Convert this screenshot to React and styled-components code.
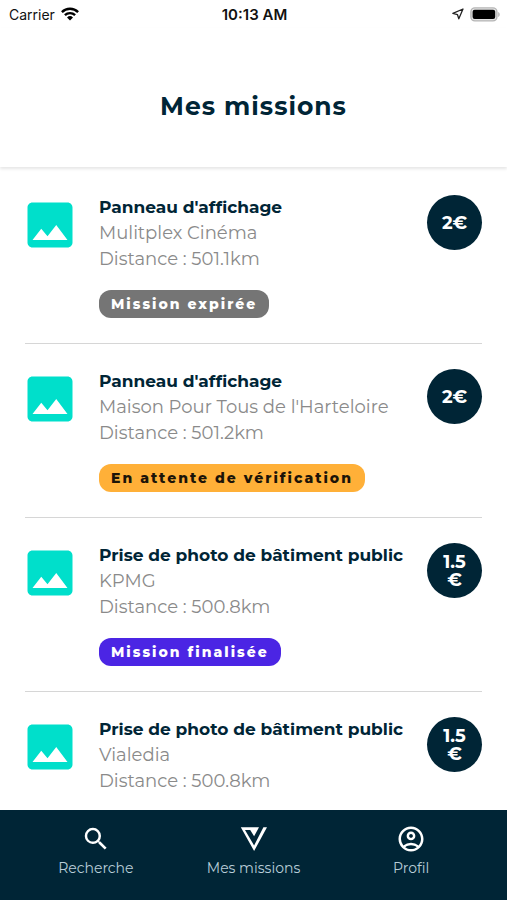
import styled, { createGlobalStyle } from "styled-components"
import { MdImage, MdSearch, MdOutlineAccountCircle } from "react-icons/md"

const missions = [
    { id: 1, title: "Panneau d'affichage", place: "Mulitplex Cinéma", distance: "501.1km", price: "2€", status: "expired" },
    { id: 2, title: "Panneau d'affichage", place: "Maison Pour Tous de l'Harteloire", distance: "501.2km", price: "2€", status: "pending" },
    { id: 3, title: "Prise de photo de bâtiment public", place: "KPMG", distance: "500.8km", price: "1.5€", status: "done" },
    { id: 4, title: "Prise de photo de bâtiment public", place: "Vialedia", distance: "500.8km", price: "1.5€" },
]

const statuses = {
    expired: { label: "Mission expirée", background: "#757575", color: "#ffffff" },
    pending: { label: "En attente de vérification", background: "#ffb038", color: "#1c1408" },
    done: { label: "Mission finalisée", background: "#4b25e4", color: "#ffffff" },
}

const WifiIcon = () => (
    <svg width="18" height="14" viewBox="0 0 18 14" aria-hidden="true">
        <g fill="none" stroke="#000" strokeWidth="2.4">
            <path d="M.9 5.1a11.6 11.6 0 0 1 16.2 0" />
            <path d="M3.9 8.2a7.3 7.3 0 0 1 10.2 0" />
        </g>
        <path d="M9 13.6 6 10.5a4.3 4.3 0 0 1 6 0z" />
    </svg>
)

const LocationIcon = () => (
    <svg width="12" height="12" viewBox="0 0 12 12" aria-hidden="true">
        <path d="M11 1 .9 5.4l4.6 1.3 1.3 4.1z" fill="none" stroke="#222" strokeWidth="1.3" strokeLinejoin="round" />
    </svg>
)

const BatteryIcon = () => (
    <svg width="30" height="15" viewBox="0 0 30 15" aria-hidden="true">
        <rect x=".9" y=".9" width="26" height="13" rx="4" fill="#e4e4e4" stroke="#b5b5b5" strokeWidth="1.4" />
        <rect x="2.6" y="2.8" width="22.6" height="9.2" rx="2" />
        <path d="M28.2 5v5c1-.4 1.5-1.3 1.5-2.5S29.2 5.4 28.2 5z" fill="#b5b5b5" />
    </svg>
)

const LogoIcon = () => (
    <svg width="28" height="26" viewBox="0 0 28 26" aria-hidden="true">
        <path
            fill="#fff"
            fillRule="evenodd"
            d="M.8 1.3H19L14.1 10.3 10.2 4H5l9.1 15.5L23.4 1.3H27L14.1 25z"
        />
    </svg>
)

const App = () => {
    return (<Screen>
        <GlobalStyle />
        <StatusBar>
            <Carrier>Carrier <WifiIcon /></Carrier>
            <Clock>10:13 AM</Clock>
            <Indicators><LocationIcon /><BatteryIcon /></Indicators>
        </StatusBar>
        <Header>
            <Title>Mes missions</Title>
        </Header>
        <MissionList>
            {missions.map((mission) => (
                <Mission key={mission.id}>
                    <Thumbnail><MdImage /></Thumbnail>
                    <Details>
                        <MissionTitle>{mission.title}</MissionTitle>
                        <Info>{mission.place}</Info>
                        <Info>Distance : {mission.distance}</Info>
                        {mission.status && (
                            <Badge $status={statuses[mission.status]}>{statuses[mission.status].label}</Badge>
                        )}
                    </Details>
                    <Price>{mission.price}</Price>
                </Mission>
            ))}
        </MissionList>
        <TabBar>
            <Tab href="#recherche">
                <TabIcon><MdSearch /></TabIcon>
                Recherche
            </Tab>
            <Tab href="#missions" aria-current="page">
                <TabIcon><LogoIcon /></TabIcon>
                Mes missions
            </Tab>
            <Tab href="#profil">
                <TabIcon><MdOutlineAccountCircle /></TabIcon>
                Profil
            </Tab>
        </TabBar>
    </Screen>)
}

const GlobalStyle = createGlobalStyle`
* {
    box-sizing: border-box;
}
body {
    margin: 0;
    background: #ffffff;
    font-family: Montserrat, Inter, "Liberation Sans", sans-serif;
}
`
const Screen = styled.div`
display: flex;
flex-direction: column;
height: 100vh;
`
const StatusBar = styled.div`
display: grid;
grid-template-columns: 1fr auto 1fr;
align-items: center;
height: 28px;
padding: 0 7px 0 9px;
font-family: Inter, "Liberation Sans", sans-serif;
font-size: 14px;
color: #111111;
`
const Carrier = styled.span`
display: flex;
align-items: center;
gap: 6px;
`
const Clock = styled.span`
font-size: 15px;
font-weight: 600;
`
const Indicators = styled.span`
display: flex;
align-items: center;
justify-content: flex-end;
gap: 6px;
`
const Header = styled.header`
display: flex;
flex-shrink: 0;
align-items: center;
justify-content: center;
padding: 62px 24px 45px;
box-shadow: 0 2px 3px rgba(0, 0, 0, 0.1);
z-index: 1;
`
const Title = styled.h1`
margin: 0;
font-size: 25px;
font-weight: 700;
line-height: 32px;
letter-spacing: 1px;
color: #002536;
`
const MissionList = styled.ul`
flex: 1;
min-height: 0;
margin: 0;
padding: 3px 25px 0;
list-style: none;
overflow-y: auto;
scrollbar-width: none;
`
const Mission = styled.li`
display: flex;
align-items: flex-start;
padding: 25px 0;
border-bottom: 1px solid #d6d6d6;
`
const Thumbnail = styled.div`
flex-shrink: 0;
width: 74px;
margin-left: -5px;
margin-right: 5px;

svg {
    display: block;
    width: 60px;
    height: 60px;
    color: #00dfcb;
}
`
const Details = styled.div`
flex: 1;
min-width: 0;
`
const MissionTitle = styled.h2`
margin: 0;
font-size: 17px;
font-weight: 700;
line-height: 25px;
color: #002536;
`
const Info = styled.p`
margin: 0;
font-size: 18px;
font-weight: 400;
line-height: 26px;
color: #8a8a8a;
`
const Badge = styled.span`
display: block;
width: fit-content;
margin-top: 18px;
padding: 0 12px;
border-radius: 12px;
font-size: 14px;
font-weight: 800;
line-height: 28px;
letter-spacing: 2px;
color: ${(props) => props.$status.color};
background: ${(props) => props.$status.background};
`
const Price = styled.div`
display: flex;
flex-shrink: 0;
align-items: center;
justify-content: center;
width: 55px;
height: 55px;
padding: 0 13px;
border-radius: 50%;
font-size: 18px;
font-weight: 700;
line-height: 18px;
text-align: center;
overflow-wrap: anywhere;
color: #ffffff;
background: #002536;
`
const TabBar = styled.nav`
display: flex;
flex-shrink: 0;
height: 90px;
padding: 14px 17px 0;
background: #002536;
`
const Tab = styled.a`
display: flex;
flex: 1;
flex-direction: column;
align-items: center;
font-size: 14px;
line-height: 20px;
text-decoration: none;
color: #b8cdd8;
`
const TabIcon = styled.span`
display: flex;
align-items: center;
justify-content: center;
height: 30px;
margin-bottom: 4px;
font-size: 30px;
color: #ffffff;
`

export default App
